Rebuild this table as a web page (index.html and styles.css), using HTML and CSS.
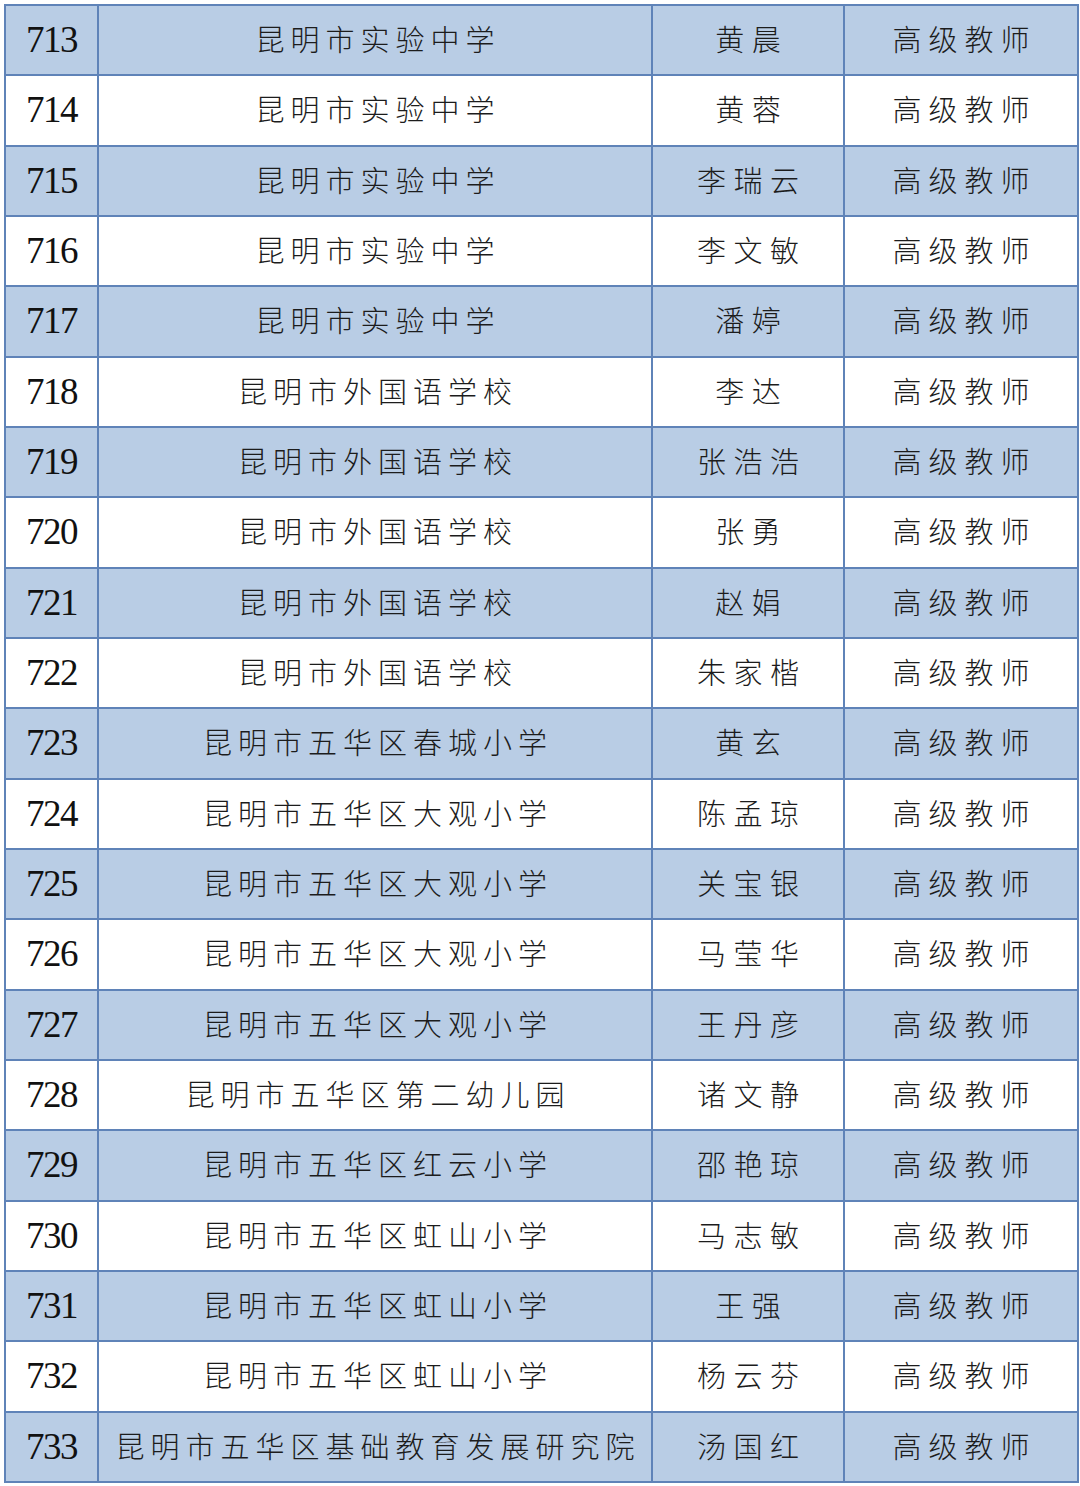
FILE: index.html
```html
<!DOCTYPE html>
<html lang="zh-CN">
<head>
<meta charset="utf-8">
<title>高级教师名单</title>
<link rel="stylesheet" href="styles.css">
</head>
<body>
<table class="roster">
<colgroup><col class="c-no"><col class="c-school"><col class="c-name"><col class="c-title"></colgroup>
<tbody>
<tr class="blue"><td class="no">713</td><td class="school">昆明市实验中学</td><td class="name">黄晨</td><td class="title">高级教师</td></tr>
<tr><td class="no">714</td><td class="school">昆明市实验中学</td><td class="name">黄蓉</td><td class="title">高级教师</td></tr>
<tr class="blue"><td class="no">715</td><td class="school">昆明市实验中学</td><td class="name">李瑞云</td><td class="title">高级教师</td></tr>
<tr><td class="no">716</td><td class="school">昆明市实验中学</td><td class="name">李文敏</td><td class="title">高级教师</td></tr>
<tr class="blue"><td class="no">717</td><td class="school">昆明市实验中学</td><td class="name">潘婷</td><td class="title">高级教师</td></tr>
<tr><td class="no">718</td><td class="school">昆明市外国语学校</td><td class="name">李达</td><td class="title">高级教师</td></tr>
<tr class="blue"><td class="no">719</td><td class="school">昆明市外国语学校</td><td class="name">张浩浩</td><td class="title">高级教师</td></tr>
<tr><td class="no">720</td><td class="school">昆明市外国语学校</td><td class="name">张勇</td><td class="title">高级教师</td></tr>
<tr class="blue"><td class="no">721</td><td class="school">昆明市外国语学校</td><td class="name">赵娟</td><td class="title">高级教师</td></tr>
<tr><td class="no">722</td><td class="school">昆明市外国语学校</td><td class="name">朱家楷</td><td class="title">高级教师</td></tr>
<tr class="blue"><td class="no">723</td><td class="school">昆明市五华区春城小学</td><td class="name">黄玄</td><td class="title">高级教师</td></tr>
<tr><td class="no">724</td><td class="school">昆明市五华区大观小学</td><td class="name">陈孟琼</td><td class="title">高级教师</td></tr>
<tr class="blue"><td class="no">725</td><td class="school">昆明市五华区大观小学</td><td class="name">关宝银</td><td class="title">高级教师</td></tr>
<tr><td class="no">726</td><td class="school">昆明市五华区大观小学</td><td class="name">马莹华</td><td class="title">高级教师</td></tr>
<tr class="blue"><td class="no">727</td><td class="school">昆明市五华区大观小学</td><td class="name">王丹彦</td><td class="title">高级教师</td></tr>
<tr><td class="no">728</td><td class="school">昆明市五华区第二幼儿园</td><td class="name">诸文静</td><td class="title">高级教师</td></tr>
<tr class="blue"><td class="no">729</td><td class="school">昆明市五华区红云小学</td><td class="name">邵艳琼</td><td class="title">高级教师</td></tr>
<tr><td class="no">730</td><td class="school">昆明市五华区虹山小学</td><td class="name">马志敏</td><td class="title">高级教师</td></tr>
<tr class="blue"><td class="no">731</td><td class="school">昆明市五华区虹山小学</td><td class="name">王强</td><td class="title">高级教师</td></tr>
<tr><td class="no">732</td><td class="school">昆明市五华区虹山小学</td><td class="name">杨云芬</td><td class="title">高级教师</td></tr>
<tr class="blue"><td class="no">733</td><td class="school">昆明市五华区基础教育发展研究院</td><td class="name">汤国红</td><td class="title">高级教师</td></tr>
</tbody>
</table>
</body>
</html>
```
FILE: styles.css
```css
html, body {
  margin: 0;
  padding: 0;
  background: #ffffff;
}

body {
  padding: 4px 0 0 4px;
}

.roster {
  border-collapse: collapse;
  table-layout: fixed;
  width: 1073px;
  height: 1479px;
  font-family: "Noto Sans CJK SC", "Noto Sans", sans-serif;
  font-weight: 300;
  color: #1c1c1c;
}

.c-no { width: 93px; }
.c-school { width: 554px; }
.c-name { width: 192px; }
.c-title { width: 234px; }

.roster td {
  border: 2px solid #5f83b8;
  text-align: center;
  vertical-align: middle;
  padding: 0 0 3px 0;
  height: 65px;
  font-size: 29px;
  line-height: 1;
  white-space: nowrap;
}

.roster tr.blue td {
  background: #b9cde5;
}

.roster td.no {
  font-family: "Liberation Serif", "Times New Roman", serif;
  font-weight: 400;
  font-size: 37px;
  letter-spacing: -1.5px;
  padding-left: 0;
  padding-bottom: 1px;
  color: #111111;
}

.roster td.school {
  letter-spacing: 6px;
  padding-left: 6px;
}

.roster td.name {
  letter-spacing: 7.5px;
  padding-left: 7.5px;
}

.roster td.title {
  letter-spacing: 7px;
  padding-left: 7px;
}
```
